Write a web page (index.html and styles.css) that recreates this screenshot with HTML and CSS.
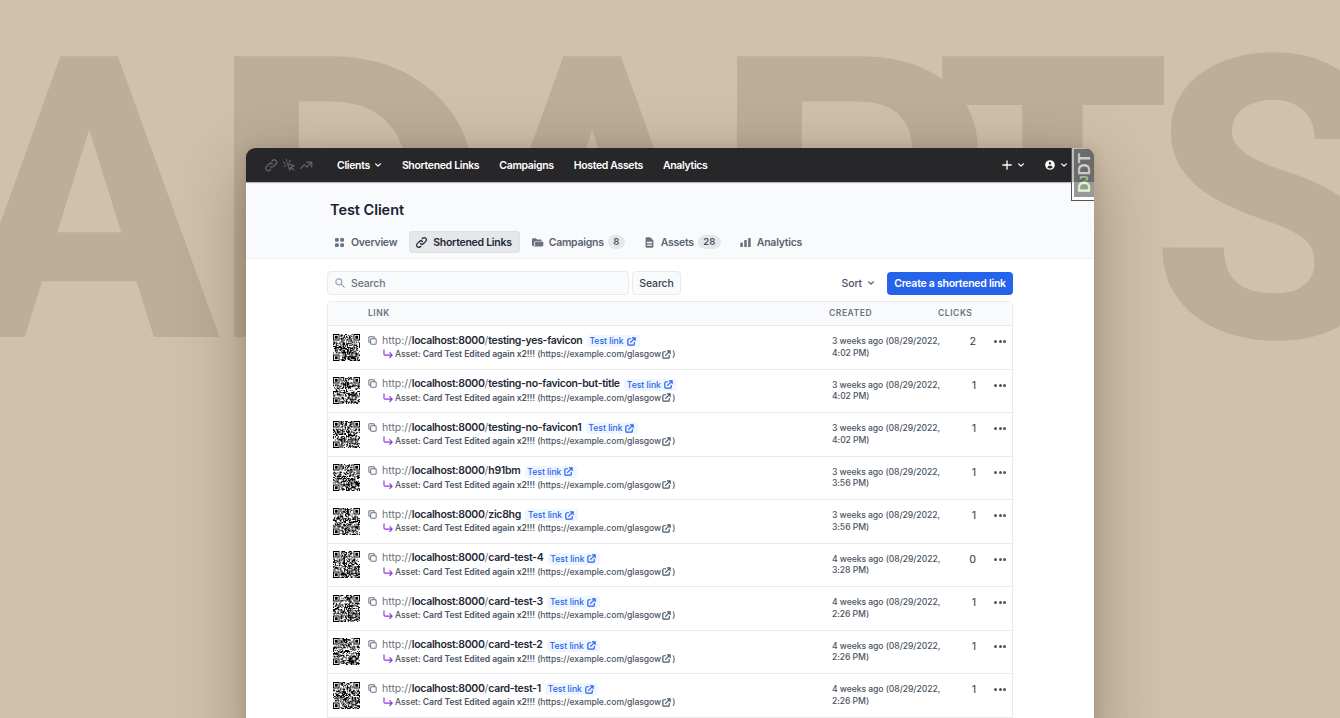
FILE: index.html
```html
<!DOCTYPE html>
<html lang="en">
<head>
<meta charset="utf-8">
<title>Test Client – Shortened Links</title>
<link rel="stylesheet" href="styles.css">
</head>
<body>
<svg width="0" height="0" class="defs" aria-hidden="true">
  <symbol id="chain" viewBox="0 0 24 24"><path fill="none" stroke="currentColor" stroke-width="2.2" stroke-linecap="round" stroke-linejoin="round" d="M13.828 10.172a4 4 0 0 0-5.656 0l-4 4a4 4 0 1 0 5.656 5.656l1.102-1.101m-.758-4.899a4 4 0 0 0 5.656 0l4-4a4 4 0 0 0-5.656-5.656l-1.1 1.1"/></symbol>
  <symbol id="click" viewBox="0 0 24 24"><path fill="none" stroke="currentColor" stroke-width="2" stroke-linecap="round" stroke-linejoin="round" d="M15 15l-2 5L9 9l11 4-5 2zm0 0l5 5M7.188 2.239l.777 2.897M5.136 7.965l-2.898-.777M13.95 4.05l-2.122 2.122m-5.657 5.656l-2.12 2.122"/></symbol>
  <symbol id="trend" viewBox="0 0 24 24"><path fill="none" stroke="currentColor" stroke-width="2.2" stroke-linecap="round" stroke-linejoin="round" d="M13 7h8m0 0v8m0-8l-8 8-4-4-6 6"/></symbol>
  <symbol id="chev" viewBox="0 0 20 20"><path fill="currentColor" d="M5.293 7.293a1 1 0 0 1 1.414 0L10 10.586l3.293-3.293a1 1 0 1 1 1.414 1.414l-4 4a1 1 0 0 1-1.414 0l-4-4a1 1 0 0 1 0-1.414z"/></symbol>
  <symbol id="plus" viewBox="0 0 10 10"><path stroke="currentColor" stroke-width="1.300" stroke-linecap="round" d="M5 .8v8.4M.8 5h8.4"/></symbol>
  <symbol id="user" viewBox="0 0 20 20"><path fill="currentColor" fill-rule="evenodd" d="M18 10a8 8 0 1 1-16 0 8 8 0 0 1 16 0zm-6-3a2 2 0 1 1-4 0 2 2 0 0 1 4 0zm-2 4a5 5 0 0 0-4.546 2.916A5.986 5.986 0 0 0 10 16a5.986 5.986 0 0 0 4.546-2.084A5 5 0 0 0 10 11z"/></symbol>
  <symbol id="grid" viewBox="0 0 20 20"><path fill="currentColor" d="M5 3a2 2 0 0 0-2 2v2a2 2 0 0 0 2 2h2a2 2 0 0 0 2-2V5a2 2 0 0 0-2-2H5zm0 8a2 2 0 0 0-2 2v2a2 2 0 0 0 2 2h2a2 2 0 0 0 2-2v-2a2 2 0 0 0-2-2H5zm6-6a2 2 0 0 1 2-2h2a2 2 0 0 1 2 2v2a2 2 0 0 1-2 2h-2a2 2 0 0 1-2-2V5zm0 8a2 2 0 0 1 2-2h2a2 2 0 0 1 2 2v2a2 2 0 0 1-2 2h-2a2 2 0 0 1-2-2v-2z"/></symbol>
  <symbol id="folder" viewBox="0 0 20 20"><path fill="currentColor" d="M1.5 5.5a2 2 0 0 1 2-2h4l2 2h5a2 2 0 0 1 2 2H8a3 3 0 0 0-3 3V14a2 2 0 0 1-1 1.700H3.500a2 2 0 0 1-2-2z"/><path fill="currentColor" d="M6.300 10.500a2 2 0 0 1 2-2H17a2 2 0 0 1 2 2V14a2 2 0 0 1-2 2H4.300a2 2 0 0 0 2-2z"/></symbol>
  <symbol id="doc" viewBox="0 0 20 20"><path fill="currentColor" fill-rule="evenodd" d="M4 4a2 2 0 0 1 2-2h4.586A2 2 0 0 1 12 2.586L15.414 6A2 2 0 0 1 16 7.414V16a2 2 0 0 1-2 2H6a2 2 0 0 1-2-2V4zm2 6a1 1 0 0 1 1-1h6a1 1 0 1 1 0 2H7a1 1 0 0 1-1-1zm1 3a1 1 0 1 0 0 2h6a1 1 0 1 0 0-2H7z"/></symbol>
  <symbol id="bars" viewBox="0 0 20 20"><path fill="currentColor" d="M2 11a1 1 0 0 1 1-1h2a1 1 0 0 1 1 1v5a1 1 0 0 1-1 1H3a1 1 0 0 1-1-1v-5zm6-4a1 1 0 0 1 1-1h2a1 1 0 0 1 1 1v9a1 1 0 0 1-1 1H9a1 1 0 0 1-1-1V7zm6-3a1 1 0 0 1 1-1h2a1 1 0 0 1 1 1v12a1 1 0 0 1-1 1h-2a1 1 0 0 1-1-1V4z"/></symbol>
  <symbol id="lens" viewBox="0 0 20 20"><path fill="currentColor" fill-rule="evenodd" d="M8 4a4 4 0 1 0 0 8 4 4 0 0 0 0-8zM2 8a6 6 0 1 1 10.890 3.476l4.817 4.817a1 1 0 0 1-1.414 1.414l-4.816-4.816A6 6 0 0 1 2 8z"/></symbol>
  <symbol id="copy" viewBox="0 0 24 24"><path fill="none" stroke="currentColor" stroke-width="2.200" stroke-linejoin="round" d="M8 16H6a2 2 0 0 1-2-2V6a2 2 0 0 1 2-2h8a2 2 0 0 1 2 2v2m-6 12h8a2 2 0 0 0 2-2v-8a2 2 0 0 0-2-2h-8a2 2 0 0 0-2 2v8a2 2 0 0 0 2 2z"/></symbol>
  <symbol id="turn" viewBox="0 0 10 10"><path fill="none" stroke="currentColor" stroke-width="1.150" stroke-linecap="round" stroke-linejoin="round" d="M1 .8v4.400q0 .9.900.9H9M6.800 3.700 9.200 6.100 6.800 8.500"/></symbol>
  <symbol id="ext" viewBox="0 0 24 24"><path fill="none" stroke="currentColor" stroke-width="2.600" stroke-linecap="round" stroke-linejoin="round" d="M10 6H6a2 2 0 0 0-2 2v10a2 2 0 0 0 2 2h10a2 2 0 0 0 2-2v-4M14 4h6m0 0v6m0-6L10 14"/></symbol>
</svg>

<svg class="backdrop" viewBox="0 0 1340 718" width="1340" height="718">
  <text transform="translate(-41 337) scale(.975 1)">A</text>
  <text class="wide" transform="translate(206 337) scale(1.12 1)">D</text>
  <text transform="translate(462 337) scale(.975 1)">A</text>
  <text class="wide" transform="translate(709 337) scale(1.12 1)">P</text>
  <text transform="translate(935 337) scale(.957 1)">T</text>
  <text transform="translate(1150 337) scale(.975 1)">S</text>
</svg>

<main class="window">
  <nav class="nav">
    <div class="brand"><svg><use href="#chain"/></svg><svg><use href="#click"/></svg><svg><use href="#trend"/></svg></div>
    <div class="menu">
      <a>Clients<svg class="chev"><use href="#chev"/></svg></a><a>Shortened Links</a><a>Campaigns</a><a>Hosted Assets</a><a>Analytics</a>
    </div>
    <div class="tools">
      <svg class="plus"><use href="#plus"/></svg><svg class="chev"><use href="#chev"/></svg>
      <svg class="user"><use href="#user"/></svg><svg class="chev"><use href="#chev"/></svg>
    </div>
    <div class="debug"><div class="debug-in"><span>D<small>J</small></span>DT</div></div>
  </nav>
  <header class="head">
    <h1>Test Client</h1>
    <div class="tabs">
      <a><svg><use href="#grid"/></svg>Overview</a>
      <a class="on"><svg><use href="#chain"/></svg>Shortened Links</a>
      <a><svg><use href="#folder"/></svg>Campaigns<b>8</b></a>
      <a><svg><use href="#doc"/></svg>Assets<b>28</b></a>
      <a><svg><use href="#bars"/></svg>Analytics</a>
    </div>
  </header>
  <section class="body">
    <div class="bar">
      <div class="search"><svg><use href="#lens"/></svg>Search</div>
      <div class="btn">Search</div>
      <div class="sort">Sort<svg class="chev"><use href="#chev"/></svg></div>
      <div class="create">Create a shortened link</div>
    </div>
    <div class="table">
      <div class="row th"><span class="c-link">Link</span><span class="c-created">Created</span><span class="c-clicks">Clicks</span></div>
      <div id="rows"></div>
    </div>
  </section>
</main>
<script src="rows.js"></script>
</body>
</html>
```
FILE: styles.css
```css
* { box-sizing: border-box; }
body { margin: 0; width: 1340px; height: 718px; overflow: hidden; background: #d1c0ab; font-family: Inter, "Liberation Sans", sans-serif; color: #4b5563; display: flex; justify-content: flex-start; }
svg { display: block; flex: none; }
.defs { position: absolute; }
.backdrop { position: absolute; left: 0; top: 0; }
.backdrop text { font-family: Roboto, sans-serif; font-size: 395px; font-weight: 800; fill: #bdae98; }
.backdrop .wide { font-weight: 720; }
.window { position: relative; width: 848px; height: 600px; margin: 148px 0 0 246px; background: #fff; border-radius: 9px 9px 0 0; box-shadow: 0 20px 70px rgba(60,45,25,.36), 0 0 14px rgba(60,45,25,.12); }
.nav { position: relative; display: flex; align-items: center; height: 34px; background: #27272a; border-radius: 9px 9px 0 0; box-shadow: 0 1px 1px rgba(0,0,0,.3); color: #fff; font-size: 10.500px; font-weight: 600; letter-spacing: -.34px; }
.brand { display: flex; gap: 3px; width: 91px; padding-left: 18px; color: #5b6371; }
.brand svg { width: 14.500px; height: 14.500px; }
.menu { display: flex; gap: 20px; }
.menu a { display: flex; align-items: center; white-space: nowrap; }
.chev { width: 12px; height: 12px; margin-left: 3px; }
.menu .chev { margin: 0 -2px 0 2px; }
.tools { display: flex; align-items: center; margin-left: auto; padding-right: 24px; }
.plus { width: 10px; height: 10px; }
.user { width: 12px; height: 12px; margin-left: 17px; }
.tools .user + .chev { margin-left: 2px; }
.debug { position: absolute; right: 0; top: 0; width: 23px; height: 53px; padding: 1px 0 3px 2px; border: 1px solid #555; border-right: 0; border-top: 0; border-top-right-radius: 9px; background: rgba(255,255,255,.7); overflow: hidden; letter-spacing: 0; }
.debug-in { width: 20px; height: 48px; padding-right: 1px; writing-mode: vertical-rl; transform: rotate(180deg); text-align: center; font: bold 17px/20px "Liberation Sans", sans-serif; letter-spacing: -.2px; color: #ccc; background: linear-gradient(#999 0 15px, #6b6b6c 15px); }
.debug-in span { color: #dcf8c8; }
.debug-in small { font-size: 10px; color: #a5cf8c; }
.head { height: 77px; padding: 18px 0 0 81px; background: #f9fafc; border-bottom: 1px solid #eeeff2; }
h1 { margin: 0 0 0 3px; font-size: 14.500px; line-height: 19px; font-weight: 600; letter-spacing: -.05px; color: #1a2233; }
.tabs { display: flex; gap: 5px; margin-top: 12px; }
.tabs a { display: flex; align-items: center; height: 22px; padding: 0 7px; border-radius: 4px; font-size: 10.500px; font-weight: 600; letter-spacing: -.27px; color: #5a6372; white-space: nowrap; }
.tabs svg { width: 13px; height: 13px; margin: 0 5px 0 -1px; color: #6b7280; }
.tabs .on { padding-right: 8px; background: #e5e7eb; color: #1f2937; box-shadow: inset 0 0 2px rgba(0,0,0,.1); }
.tabs .on svg { color: #1f2937; }
.tabs b { margin-left: 4px; padding: 0 5.500px; border-radius: 8px; background: #e5e7eb; font-size: 9.500px; line-height: 14px; font-weight: 600; letter-spacing: 0; color: #4b5563; }
.body { width: 686px; margin-left: 81px; padding-top: 12px; }
.bar { display: flex; align-items: center; height: 24px; font-size: 10.500px; font-weight: 500; }
.search, .btn { display: flex; align-items: center; height: 24px; border: 1px solid #e8eaee; border-radius: 4px; background: #f9fafb; letter-spacing: -.15px; }
.search { width: 302px; padding-left: 6px; color: #6b7280; }
.search svg { width: 12px; height: 12px; margin-right: 5px; color: #9ca3af; }
.btn { width: 49px; margin-left: 3px; justify-content: center; color: #374151; }
.sort { display: flex; align-items: center; margin-left: auto; margin-right: 10px; letter-spacing: -.1px; }
.create { display: flex; align-items: center; justify-content: center; width: 126px; height: 23px; border-radius: 4px; background: #2563eb; color: #fff; font-weight: 600; letter-spacing: -.26px; white-space: nowrap; }
.table { margin-top: 6px; border: 1px solid #e8eaee; border-radius: 4px 4px 0 0; height: 440px; }
.row { display: flex; height: 43.550px; border-bottom: 1px solid #e8eaee; }
.row.th { height: 24px; padding-bottom: 1px; align-items: center; background: #f9fafb; font-size: 8.500px; font-weight: 600; letter-spacing: .55px; text-transform: uppercase; color: #6b7280; }
.th .c-link { width: 461px; padding-left: 40px; }
.th .c-created { width: 40px; margin-left: 40px; }
.th .c-clicks { margin-left: 69px; }
.qr { width: 27px; height: 27px; margin: 7.500px 0 0 5px; }
.link { width: 471px; padding: 7px 0 0 7px; }
.url { display: flex; align-items: center; height: 14px; font-size: 10.500px; white-space: pre; color: #6b7280; }
.url svg.copy { width: 11px; height: 11px; margin-right: 4px; }
.url strong { font-weight: 600; letter-spacing: -.33px; color: #1f2937; }
.test { display: flex; align-items: center; height: 12px; margin: 2px 0 0 4.500px; padding: 0 3px 0 2.500px; border-radius: 3px; background: #eff6ff; color: #2563eb; font-size: 8.600px; font-weight: 500; }
.test svg { width: 11px; height: 11px; margin-left: 2px; }
.asset { display: flex; align-items: center; height: 12px; margin-top: 1px; padding-left: 16px; font-size: 8.600px; font-weight: 500; letter-spacing: -.06px; white-space: pre; }
.asset b { font-weight: 600; }
.asset .turn { width: 10px; height: 10px; margin-right: 2px; color: #9333ea; }
.asset .ext { width: 11px; height: 11px; margin-left: 0; }
.created { width: 120px; margin-left: 1px; padding-top: 10px; font-size: 8.600px; line-height: 11.500px; font-weight: 500; letter-spacing: -.06px; }
.clicks { width: 24px; padding-top: 9px; text-align: right; font-size: 10.500px; line-height: 13px; font-weight: 500; }
.dots { display: flex; gap: 1.500px; margin: 14px 0 0 18px; }
.dots i { width: 3px; height: 3px; border-radius: 50%; background: #4b5563; }
```
FILE: rows.js
```js
const links = [
  ["testing-yes-favicon", "3 weeks ago (08/29/2022, 4:02 PM)", 2],
  ["testing-no-favicon-but-title", "3 weeks ago (08/29/2022, 4:02 PM)", 1],
  ["testing-no-favicon1", "3 weeks ago (08/29/2022, 4:02 PM)", 1],
  ["h91bm", "3 weeks ago (08/29/2022, 3:56 PM)", 1],
  ["zic8hg", "3 weeks ago (08/29/2022, 3:56 PM)", 1],
  ["card-test-4", "4 weeks ago (08/29/2022, 3:28 PM)", 0],
  ["card-test-3", "4 weeks ago (08/29/2022, 2:26 PM)", 1],
  ["card-test-2", "4 weeks ago (08/29/2022, 2:26 PM)", 1],
  ["card-test-1", "4 weeks ago (08/29/2022, 2:26 PM)", 1]
];

// Code pattern: three finder squares, one alignment square, seeded data modules.
function qr(seed) {
  const n = 29;
  let s = seed * 7919 + 13;
  const rnd = () => (s = (s * 1103515245 + 12345) % 2147483648) / 2147483648;
  const ring = (x, y, cx, cy) => Math.max(Math.abs(x - cx), Math.abs(y - cy));
  let d = "";
  for (let y = 0; y < n; y++) for (let x = 0; x < n; x++) {
    let on = rnd() > 0.48;
    for (const [cx, cy] of [[3, 3], [n - 4, 3], [3, n - 4]]) {
      const r = ring(x, y, cx, cy);
      if (r <= 4) on = r < 2 || r === 3;
    }
    const a = ring(x, y, n - 7, n - 7);
    if (a <= 2) on = a !== 1;
    if (on) d += `M${x} ${y}h1v1h-1z`;
  }
  return `<svg class="qr" viewBox="0 0 29 29"><path d="${d}"/></svg>`;
}

const icon = (id) => `<svg class="${id}"><use href="#${id}"/></svg>`;

document.getElementById("rows").innerHTML = links.map(([slug, date, clicks], i) => `
  <div class="row">${qr(i + 1)}
    <div class="link">
      <div class="url">${icon("copy")}<span>http://<strong>localhost:8000</strong>/<strong>${slug}</strong></span><span class="test">Test link${icon("ext")}</span></div>
      <div class="asset">${icon("turn")}<span>Asset: <b>Card Test Edited again x2!!!</b> (https://example.com/glasgow</span>${icon("ext")}<span>)</span></div>
    </div>
    <div class="created">${date}</div>
    <div class="clicks">${clicks}</div>
    <div class="dots"><i></i><i></i><i></i></div>
  </div>`).join("");
```
